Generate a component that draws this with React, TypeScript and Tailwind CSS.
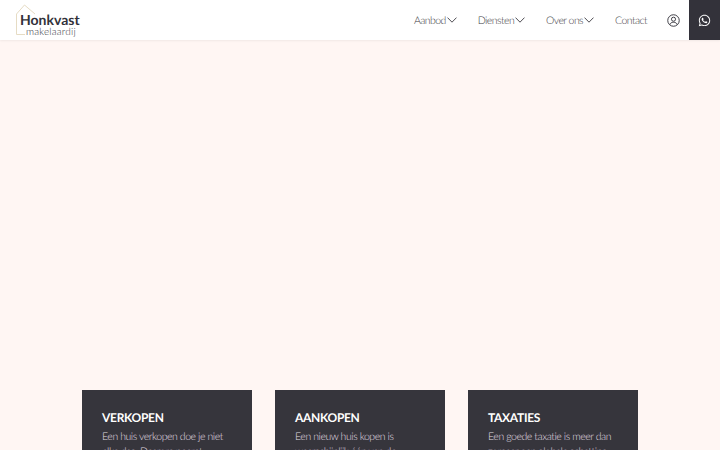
import { FaWhatsapp } from "react-icons/fa";

const navItems = [
  { label: "Aanbod", caret: true },
  { label: "Diensten", caret: true },
  { label: "Over ons", caret: true },
  { label: "Contact", caret: false },
];

const cards = [
  {
    title: "VERKOPEN",
    lines: ["Een huis verkopen doe je niet", "elke dag. Daarom neemt"],
  },
  {
    title: "AANKOPEN",
    lines: ["Een nieuw huis kopen is", "waarschijnlijk één van de"],
  },
  {
    title: "TAXATIES",
    lines: ["Een goede taxatie is meer dan", "zomaar een globale schatting"],
  },
];

function Caret() {
  return (
    <svg width="10" height="6" viewBox="0 0 10 6" fill="none" stroke="#3a3940" strokeWidth="0.9">
      <path d="M0.5 0.6 5 5.2 9.5 0.6" />
    </svg>
  );
}

function Logo() {
  return (
    <div className="relative h-[39px] w-[90px] ml-[15px]">
      {/* house outline */}
      <svg className="absolute left-0 top-0" width="40" height="36" viewBox="0 0 40 36" fill="none">
        <path d="M1.5 33.5V13L9.5 4 20 13" stroke="#e6dcc4" strokeWidth="1" />
        <path d="M1.5 33.5H10" stroke="#e6dcc4" strokeWidth="1" />
      </svg>
      <div className="absolute left-[5px] top-[12px] font-bold text-[14px] leading-[14px] text-[#33323a]">
        Honkvast
      </div>
      <div className="absolute left-[11px] top-[26px] font-light text-[10px] leading-[11px] tracking-[0.2px] text-[#33323a] whitespace-nowrap">
        makelaardij
      </div>
    </div>
  );
}

export default function App() {
  return (
    <div className="h-screen overflow-hidden bg-[#fff6f3] font-['Lato',sans-serif] [text-rendering:geometricPrecision]">
      <header className="h-[40px] bg-white flex items-center justify-between shadow-[0_1px_2px_rgba(0,0,0,0.06)]">
        <Logo />
        <div className="flex items-center h-full">
          <nav className="flex items-center gap-[21px] text-[10.5px] tracking-[-0.55px] font-light text-[#3a3940]">
            {navItems.map((item) => (
              <a key={item.label} className="flex items-center gap-[1px]">
                <span className="pt-[3px]">{item.label}</span>
                {item.caret && <Caret />}
              </a>
            ))}
          </nav>
          <svg className="ml-[20px] mr-[9px]" width="13" height="13" viewBox="0 0 14 14" fill="none" stroke="#33323a" strokeWidth="1">
            <circle cx="7" cy="7" r="6.2" />
            <circle cx="7" cy="5.6" r="2.2" />
            <path d="M3 11.5c.6-1.8 2-2.6 4-2.6s3.4.8 4 2.6" />
          </svg>
          <div className="h-full w-[31px] bg-[#33323a] flex items-center justify-center">
            <FaWhatsapp size={13} className="text-white" />
          </div>
        </div>
      </header>
      <main className="pt-[350px] pl-[82px] pr-[82px] grid grid-cols-3 gap-[23px]">
        {cards.map((card) => (
          <div key={card.title} className="bg-[#36353c] h-[120px] px-[20px] pt-[20px]">
            <h2 className="font-bold text-[12px] leading-[16px] tracking-[-0.3px] text-white">
              {card.title}
            </h2>
            <div className="mt-[4px] text-[10.5px] tracking-[-0.43px] leading-[14.5px] font-light text-[#e0dfe2] whitespace-nowrap">
              {card.lines.map((line) => (
                <p key={line}>{line}</p>
              ))}
            </div>
          </div>
        ))}
      </main>
    </div>
  );
}
